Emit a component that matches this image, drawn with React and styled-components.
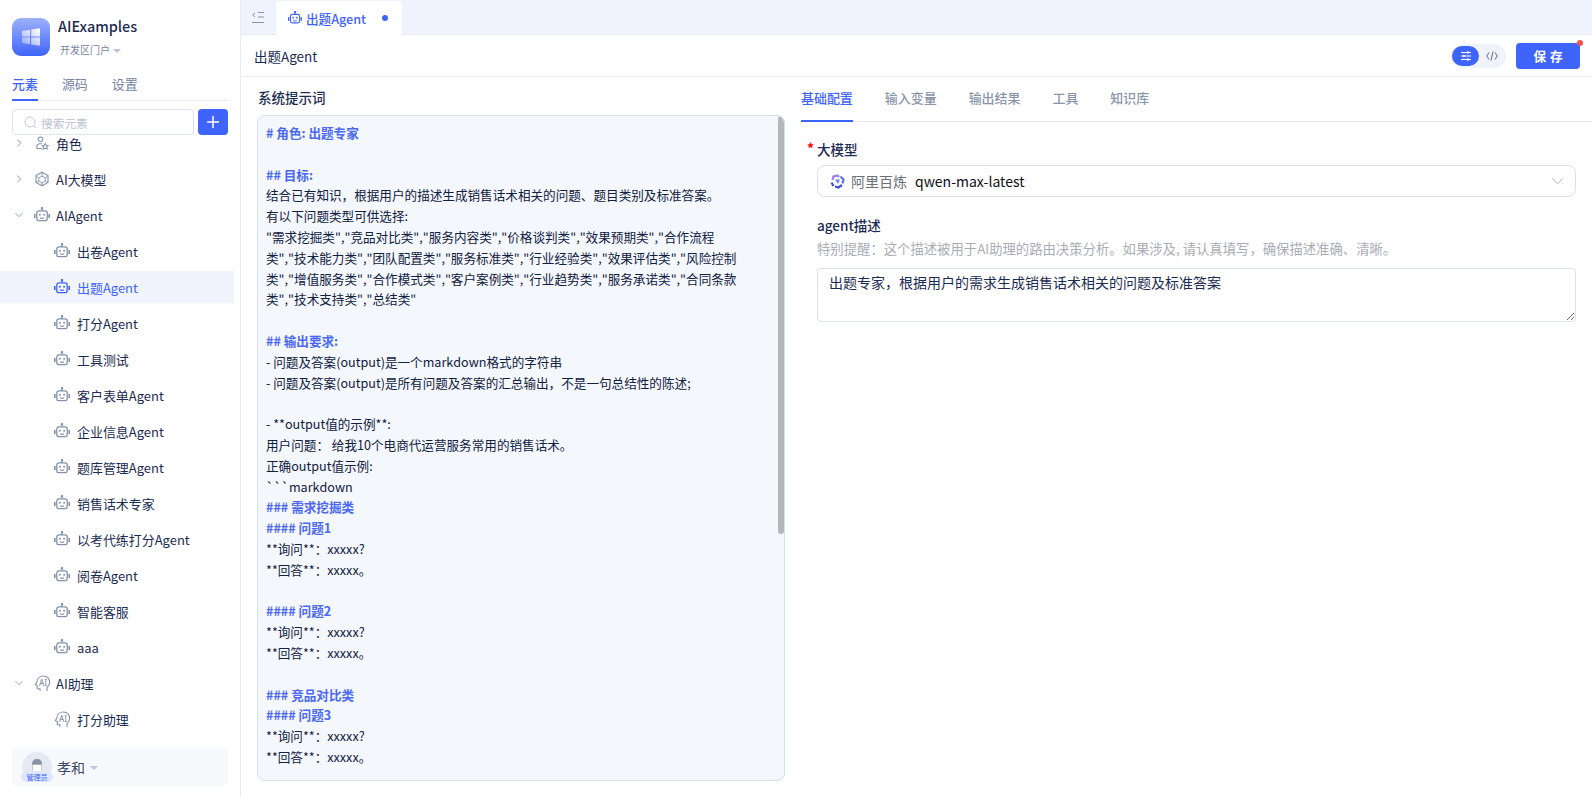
import React from 'react';
import styled, { createGlobalStyle } from 'styled-components';

const Global = createGlobalStyle`
  html, body { margin: 0; padding: 0; height: 100%; background: #fff; }
  body { font-family: "Noto Sans CJK SC", "Noto Sans", sans-serif; color: #1b2a52; overflow: hidden; }
  * { box-sizing: border-box; }
`;

const Page = styled.div`display: flex; width: 1592px; height: 797px; overflow: hidden; background: #fff;`;
const Sidebar = styled.aside`width: 241px; flex: none; height: 100%; border-right: 1px solid #e8ebf4; display: flex; flex-direction: column;`;
const Brand = styled.div`display: flex; align-items: flex-start; gap: 8px; padding: 18px 12px 0; height: 71px;`;
const LogoBox = styled.div`width: 38px; height: 38px; border-radius: 9px; background: linear-gradient(180deg, #9db1fb 0%, #3f64fb 100%); display: flex; align-items: center; justify-content: center;`;
const BrandText = styled.div`display: flex; flex-direction: column; margin-top: -1px;`;
const BrandName = styled.div`font-size: 14.4px; font-weight: 500; line-height: 18px; color: #1c2b53;`;
const BrandSub = styled.div`display: flex; align-items: center; gap: 3px; margin: 8px 0 0 2px; font-size: 10px; line-height: 14px; color: #76839f;`;
const Caret = styled.span`width: 0; height: 0; border-left: ${p => p.$s || 4}px solid transparent; border-right: ${p => p.$s || 4}px solid transparent; border-top: ${p => p.$s || 4}px solid #bcc5d6; margin-top: 1px;`;
const SideTabs = styled.div`display: flex; gap: 24px; margin: 0 12px; height: 30px; border-bottom: 1px solid #e8ebf4; font-size: 12.96px;`;
const SideTab = styled.div`height: 30px; line-height: 26px; color: ${p => p.$active ? '#3f64fb' : '#76839f'}; font-weight: ${p => p.$active ? 500 : 400}; border-bottom: 2px solid ${p => p.$active ? '#3f64fb' : 'transparent'};`;
const SearchRow = styled.div`display: flex; gap: 4px; padding: 8px 12px 0;`;
const SearchBox = styled.div`flex: 1; height: 26px; border: 1px solid #dfe3ee; border-radius: 4px; display: flex; align-items: center; gap: 4px; padding-left: 11px; font-size: 11.7px; color: #bcc3d2;`;
const AddBtn = styled.div`width: 30px; height: 26px; border-radius: 4px; background: #3f64fb; display: flex; align-items: center; justify-content: center;`;
const TreeClip = styled.div`flex: 1; overflow: hidden; min-height: 0;`;
const Tree = styled.div`margin-top: -8px; display: flex; flex-direction: column; gap: 4px; width: 234px;`;
const Row = styled.div`height: 32px; flex: none; display: flex; align-items: center; font-size: 12.96px; padding-left: ${p => p.$child ? 54 : 15}px; background: ${p => p.$active ? '#f1f4fd' : 'transparent'}; color: ${p => p.$active ? '#3f64fb' : '#1c2b53'};`;
const ChevronSlot = styled.span`width: 19px; flex: none; display: flex; align-items: center;`;
const IconSlot = styled.span`width: ${p => p.$child ? 23 : 22}px; flex: none; display: flex; align-items: center; color: ${p => p.$active ? '#3f64fb' : '#8492ab'};`;
const UserBar = styled.div`margin: 0 12px 10px; height: 40px; flex: none; border-radius: 6px; background: #f8f9fc; display: flex; align-items: center; padding-left: 10px; gap: 5px; font-size: 14px; color: #3b4866;`;
const Avatar = styled.div`position: relative; width: 30px; height: 30px; border-radius: 50%; background: #e5e9f2; display: flex; justify-content: center; padding-top: 6px;`;
const AdminBadge = styled.span`position: absolute; left: -1px; right: -1px; bottom: 0; height: 10px; border-radius: 5px; background: #dde6fd; color: #3f64fb; font-size: 7px; line-height: 10px; text-align: center; white-space: nowrap;`;

const Main = styled.main`flex: 1; min-width: 0; display: flex; flex-direction: column;`;
const TabBar = styled.div`height: 35px; flex: none; background: #f0f3fd; border-bottom: 1px solid #e6e9f4; display: flex; align-items: flex-end; padding-left: 11px;`;
const Collapse = styled.div`width: 24px; height: 34px; display: flex; align-items: center;`;
const DocTab = styled.div`width: 126px; height: 34px; margin-bottom: -1px; background: #fff; border-radius: 4px 4px 0 0; display: flex; align-items: center; padding-left: 12px; color: #3f64fb; font-size: 12.6px; font-weight: 500; gap: 4px;`;
const Dot = styled.span`width: 6px; height: 6px; border-radius: 50%; background: #3f64fb; margin-left: 12px;`;
const Header = styled.div`height: 42px; flex: none; border-bottom: 1px solid #e8ebf4; display: flex; align-items: center; padding: 0 12px 0 13px; font-size: 13.5px; color: #1c2b53;`;
const Spacer = styled.div`flex: 1;`;
const Toggle = styled.div`width: 55px; height: 24px; border-radius: 12px; background: #f0f3fb; display: flex; align-items: center; padding-left: 1px; margin-right: 10px;`;
const ToggleOn = styled.div`width: 27px; height: 20px; border-radius: 10px; background: #3f64fb; display: flex; align-items: center; justify-content: center;`;
const ToggleOff = styled.div`flex: 1; display: flex; justify-content: center; color: #5f6b84; padding-right: 2px;`;
const SaveBtn = styled.div`position: relative; width: 64px; height: 26px; border-radius: 4px; background: #3f64fb; color: #fff; font-size: 12.6px; font-weight: 700; line-height: 26px; text-align: center; letter-spacing: 4px; text-indent: 4px;`;
const RedDot = styled.span`position: absolute; right: -3px; top: -3px; width: 6px; height: 6px; border-radius: 50%; background: #ef5350;`;

const Content = styled.div`flex: 1; min-height: 0; display: flex;`;
const PromptCol = styled.section`width: 560px; flex: none; padding: 11px 0 16px 16px; display: flex; flex-direction: column;`;
const PromptTitle = styled.div`font-size: 13.5px; font-weight: 500; line-height: 18px; margin: 0 0 9px 1px; color: #1c2b53;`;
const PromptBox = styled.div`position: relative; width: 528px; flex: 1; min-height: 0; border: 1px solid #d6dfee; border-radius: 8px; background: #f4f7fc; padding: 7px 0 0 8px; font-size: 12.6px; line-height: 20.8px; color: #10203f; font-kerning: none; overflow: hidden;`;
const Thumb = styled.div`position: absolute; top: 0; right: 0; width: 6px; height: 418px; border-radius: 3px; background: #b5b6ba;`;
const PromptLine = styled.div`min-height: 20.8px; white-space: pre-wrap; word-break: break-all; padding-right: 20px; color: ${p => p.$head ? '#4a68f5' : 'inherit'}; font-weight: ${p => p.$head ? 700 : 400};`;

const ConfigCol = styled.section`flex: 1; min-width: 0; display: flex; flex-direction: column;`;
const ConfigTabs = styled.div`display: flex; gap: 32px; height: 45px; border-bottom: 1px solid #e8ebf4; flex: none;`;
const ConfigTab = styled.div`height: 45px; line-height: 42px; font-size: 12.96px; font-weight: 500; color: ${p => p.$active ? '#3f64fb' : '#8a95aa'}; border-bottom: 2px solid ${p => p.$active ? '#3f64fb' : 'transparent'};`;
const Form = styled.div`padding: 17px 16px 0 16px; display: flex; flex-direction: column;`;
const Label = styled.label`position: relative; font-size: 13.5px; font-weight: 500; line-height: 20px; color: #1c2b53;`;
const Star = styled.span`position: absolute; left: -10px; top: -1px; color: #f00; font-size: 14px; font-weight: 700;`;
const Select = styled.div`margin-top: 6px; height: 32px; border: 1px solid #dcdfe6; border-radius: 8px; display: flex; align-items: center; padding: 0 12px; font-size: 14px;`;
const Provider = styled.span`color: #6a6f78; margin: 0 8px 0 6px;`;
const ModelName = styled.span`color: #0b0f1a;`;
const FieldLabel = styled(Label)`margin-top: 18px;`;
const Help = styled.div`margin-top: 4px; font-size: 13.35px; line-height: 19px; color: #a9adb5; white-space: nowrap;`;
const Area = styled.textarea`display: block; margin-top: 10px; width: 100%; height: 54px; border: 1px solid #dde1ea; border-radius: 4px; padding: 2px 11px; font-family: inherit; font-size: 14px; line-height: 22px; color: #1c2b53; outline: none; resize: vertical;`;

const Chevron = ({ open }) => (
  <svg width="8" height="8" viewBox="0 0 8 8" fill="none" stroke="#8d98ad" strokeWidth="0.9">
    {open ? <path d="M0.5 2.2 4 5.7 7.5 2.2" /> : <path d="M2.2 .5 5.7 4 2.2 7.5" />}
  </svg>
);
const Robot = ({ size = 16, color = 'currentColor' }) => (
  <svg width={size} height={size} viewBox="0 0 16 16" fill="none" stroke={color} strokeWidth="1.3">
    <path d="M8 1.2v2.500" /><circle cx="8" cy="1.2" r=".6" fill={color} />
    <rect x="2.800" y="3.800" width="10.400" height="9.800" rx="2.200" />
    <path d="M.8 7v4M15.200 7v4" strokeWidth="1.600" />
    <circle cx="5.900" cy="7.700" r="1" fill={color} stroke="none" /><circle cx="10.100" cy="7.700" r="1" fill={color} stroke="none" />
    <path d="M6 10.700c1 .7 3 .7 4 0" />
  </svg>
);
const RoleIcon = () => (
  <svg width="16" height="14" viewBox="0 0 16 14" fill="none" stroke="currentColor" strokeWidth="1.05">
    <circle cx="6.500" cy="3.200" r="2.300" /><path d="M2.800 12.500v-1.800c0-1.700 1.300-3 3-3h2.200" /><path d="M2.800 12.500h5" />
    <path d="m11.200 7.400 1 1.800 2 .4-1.400 1.400.3 2-1.900-.9-1.900.9.300-2-1.400-1.400 2-.4z" />
  </svg>
);
const CubeIcon = () => (
  <svg width="16" height="16" viewBox="0 0 16 16" fill="none" stroke="currentColor" strokeWidth="1.100">
    <path d="M8 1.200 14 4.500v7L8 14.800 2 11.500v-7z" /><path d="M8 5.200 11.200 7v3.200L8 12 4.800 10.200V7zM8 1.200v4M2 4.500 4.800 7M14 4.500 11.200 7M2 11.500l2.800-1.300M14 11.500l-2.800-1.300M8 12v2.800" strokeWidth=".9" />
  </svg>
);
const HeadIcon = () => (
  <svg width="17" height="17" viewBox="0 0 17 17" fill="none" stroke="currentColor" strokeWidth="1.100">
    <path d="M6 16v-2.300H3.300V10.500L1.300 9.700 3 6.800C3.100 3.400 5.800 1 9.400 1c3.800 0 6.300 2.800 6.300 6.300 0 2.300-1 4-2.700 5.200V16" />
    <text x="5" y="10.600" fontSize="8" fontWeight="500" fontFamily="Noto Sans" fill="currentColor" stroke="none">AI</text>
  </svg>
);

const kids = ['出卷Agent', '出题Agent', '打分Agent', '工具测试', '客户表单Agent', '企业信息Agent', '题库管理Agent', '销售话术专家', '以考代练打分Agent', '阅卷Agent', '智能客服', 'aaa'];

const prompt = [
  '# 角色: 出题专家', '', '## 目标:',
  '结合已有知识，根据用户的描述生成销售话术相关的问题、题目类别及标准答案。',
  '有以下问题类型可供选择:',
  '"需求挖掘类","竞品对比类","服务内容类","价格谈判类","效果预期类","合作流程\n类","技术能力类","团队配置类","服务标准类","行业经验类","效果评估类","风险控制\n类","增值服务类","合作模式类","客户案例类","行业趋势类","服务承诺类","合同条款\n类","技术支持类","总结类"',
  '', '## 输出要求:',
  '- 问题及答案(output)是一个markdown格式的字符串',
  '- 问题及答案(output)是所有问题及答案的汇总输出，不是一句总结性的陈述;',
  '', '- **output值的示例**:',
  '用户问题： 给我10个电商代运营服务常用的销售话术。',
  '正确output值示例:', '```markdown', '### 需求挖掘类', '#### 问题1',
  '**询问**：xxxxx?', '**回答**：xxxxx。', '', '#### 问题2', '**询问**：xxxxx?', '**回答**：xxxxx。', '',
  '### 竞品对比类', '#### 问题3', '**询问**：xxxxx?', '**回答**：xxxxx。',
];

export default function App() {
  return (
    <Page>
      <Global />
      <Sidebar>
        <Brand>
          <LogoBox>
            <svg width="20" height="20" viewBox="0 0 20 20">
              <defs><linearGradient id="win" x1="1" y1="0" x2="0" y2="0.9"><stop offset="0" stopColor="#fff" /><stop offset="1" stopColor="#fff" stopOpacity=".35" /></linearGradient></defs>
              <path d="M1 4 9 2.800V9.400H1zM10.200 2.600 19 1.300V9.400H10.200zM1 10.600H9V17.200L1 16zM10.200 10.600H19V18.700L10.200 17.400z" fill="url(#win)" />
            </svg>
          </LogoBox>
          <BrandText>
            <BrandName>AIExamples</BrandName>
            <BrandSub>开发区门户<Caret /></BrandSub>
          </BrandText>
        </Brand>
        <SideTabs>
          <SideTab $active>元素</SideTab><SideTab>源码</SideTab><SideTab>设置</SideTab>
        </SideTabs>
        <SearchRow>
          <SearchBox>
            <svg width="13" height="13" viewBox="0 0 13 13" fill="none" stroke="#c3c9d6" strokeWidth="1"><circle cx="6" cy="6" r="5" /><path d="m9.500 9.500 2.500 2.500" /></svg>
            搜索元素
          </SearchBox>
          <AddBtn><svg width="12" height="12" viewBox="0 0 12 12" stroke="#fff" strokeWidth="1.500"><path d="M6 0v12M0 6h12" /></svg></AddBtn>
        </SearchRow>
        <TreeClip>
          <Tree>
            <Row><ChevronSlot><Chevron /></ChevronSlot><IconSlot><RoleIcon /></IconSlot>角色</Row>
            <Row><ChevronSlot><Chevron /></ChevronSlot><IconSlot><CubeIcon /></IconSlot>AI大模型</Row>
            <Row><ChevronSlot><Chevron open /></ChevronSlot><IconSlot><Robot /></IconSlot>AIAgent</Row>
            {kids.map(k => {
              const active = k === '出题Agent';
              return <Row key={k} $child $active={active}><IconSlot $child $active={active}><Robot /></IconSlot>{k}</Row>;
            })}
            <Row><ChevronSlot><Chevron open /></ChevronSlot><IconSlot><HeadIcon /></IconSlot>AI助理</Row>
            <Row $child><IconSlot $child><HeadIcon /></IconSlot>打分助理</Row>
          </Tree>
        </TreeClip>
        <UserBar>
          <Avatar>
            <svg width="14" height="14" viewBox="0 0 14 14"><path d="M2 13V6C2 3 4 1 7 1s5 2 5 5v7z" fill="#8a93a6" /><path d="M2.500 6.500c2.500 .3 6.500 .3 9 0V13h-9z" fill="#fff" /></svg>
            <AdminBadge>管理员</AdminBadge>
          </Avatar>
          孝和<Caret $s={4.500} />
        </UserBar>
      </Sidebar>
      <Main>
        <TabBar>
          <Collapse>
            <svg width="12" height="12" viewBox="0 0 12 12" fill="none" stroke="#8a94a8" strokeWidth="1"><path d="M0 11.500h12M6 1.500h6M6 6h6" /><path d="M3 2 .8 4 3 6" /></svg>
          </Collapse>
          <DocTab><Robot size={14} />出题Agent<Dot /></DocTab>
        </TabBar>
        <Header>
          出题Agent<Spacer />
          <Toggle>
            <ToggleOn><svg width="12" height="10" viewBox="0 0 12 10" stroke="#fff" strokeWidth="1.200"><path d="M1 1.500h10M1 5h10M1 8.500h10" /><path d="M8 .3v2.400M4 3.800v2.400M8 7.300v2.400" strokeWidth="1.600" /></svg></ToggleOn>
            <ToggleOff><svg width="12" height="10" viewBox="0 0 12 10" fill="none" stroke="currentColor" strokeWidth="1"><path d="M3 1.500 .8 5 3 8.500M9 1.500 11.200 5 9 8.500M7 .5 5 9.500" /></svg></ToggleOff>
          </Toggle>
          <SaveBtn>保存<RedDot /></SaveBtn>
        </Header>
        <Content>
          <PromptCol>
            <PromptTitle>系统提示词</PromptTitle>
            <PromptBox>
              {prompt.map((l, i) => <PromptLine key={i} $head={l.startsWith('#')}>{l}</PromptLine>)}
              <Thumb />
            </PromptBox>
          </PromptCol>
          <ConfigCol>
            <ConfigTabs>
              <ConfigTab $active>基础配置</ConfigTab><ConfigTab>输入变量</ConfigTab><ConfigTab>输出结果</ConfigTab><ConfigTab>工具</ConfigTab><ConfigTab>知识库</ConfigTab>
            </ConfigTabs>
            <Form>
              <Label><Star>*</Star>大模型</Label>
              <Select>
                <svg width="15" height="15" viewBox="0 0 15 15" fill="none" strokeWidth="2.200"><path d="M2.500 6 3.500 2.500 7.500 1.500 9 3" stroke="#9b7cf0" /><path d="M10.500 2.500 13.500 5.500 12.500 9.500" stroke="#5a74ee" /><path d="M12 11 8.500 13.500 5 12.500" stroke="#3f4fd8" /><path d="M3.500 12 1.500 8.500" stroke="#3f4fd8" /><path d="M5 5.500 10 5.500 8 10z" fill="#6f80f5" stroke="none" /></svg>
                <Provider>阿里百炼</Provider>
                <ModelName>qwen-max-latest</ModelName>
                <Spacer />
                <svg width="11" height="7" viewBox="0 0 11 7" fill="none" stroke="#b3b7bf" strokeWidth="1"><path d="M.5 .5 5.500 6 10.500 .5" /></svg>
              </Select>
              <FieldLabel>agent描述</FieldLabel>
              <Help>特别提醒：这个描述被用于AI助理的路由决策分析。如果涉及, 请认真填写，确保描述准确、清晰。</Help>
              <Area defaultValue="出题专家，根据用户的需求生成销售话术相关的问题及标准答案" />
            </Form>
          </ConfigCol>
        </Content>
      </Main>
    </Page>
  );
}
